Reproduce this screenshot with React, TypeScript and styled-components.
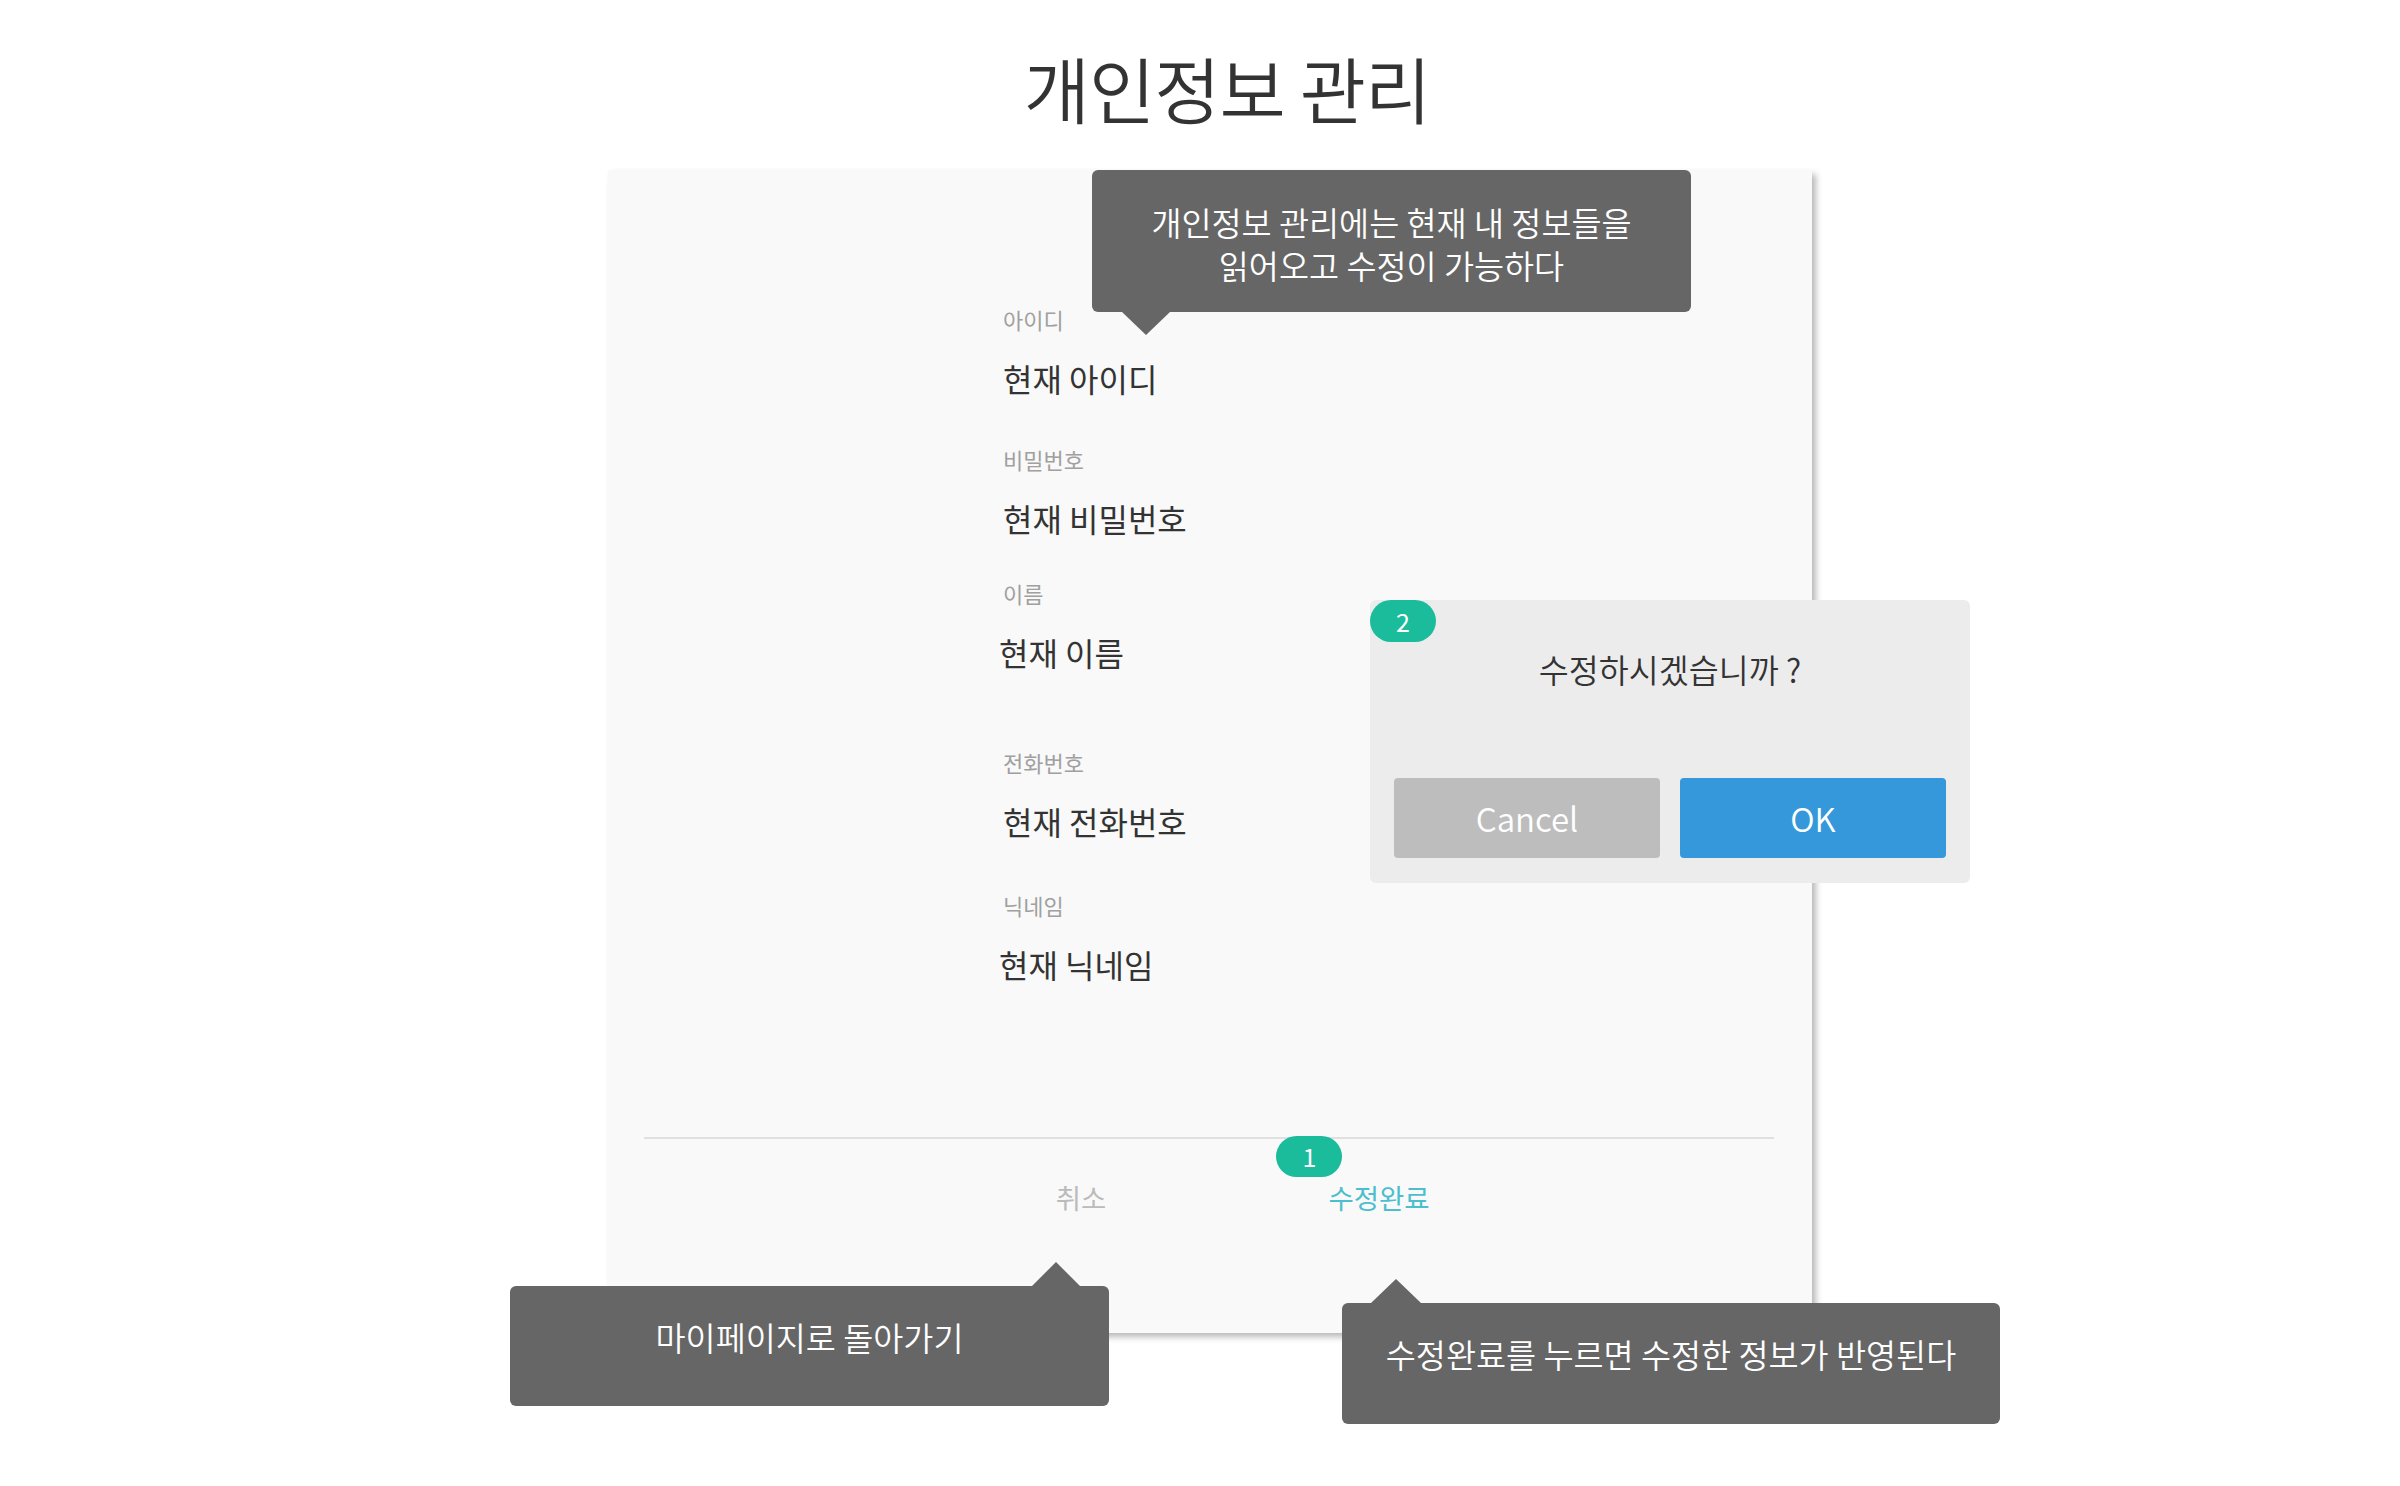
import React from "react";
import styled, { createGlobalStyle } from "styled-components";

const GlobalStyle = createGlobalStyle`
  html, body {
    margin: 0;
    padding: 0;
    background: #ffffff;
  }
  body {
    font-family: "Noto Sans CJK KR", "Noto Sans", sans-serif;
    color: #333333;
  }
  * { box-sizing: border-box; }
`;

const Page = styled.div`
  width: 2400px;
  min-height: 1486px;
  display: flex;
  flex-direction: column;
  align-items: center;
  padding-left: 20px;
`;

const Title = styled.h1`
  margin: 51px 0 0 34px;
  font-size: 72px;
  font-weight: 350;
  line-height: 1;
  color: #333333;
  letter-spacing: -1px;
`;

const Card = styled.section`
  position: relative;
  width: 1204px;
  height: 1163px;
  margin-top: 47px;
  background: #f9f9f9;
  border-radius: 2px;
  box-shadow: 4px 4px 6px rgba(0, 0, 0, 0.28);
  display: flex;
  flex-direction: column;
`;

const Fields = styled.div`
  display: flex;
  flex-direction: column;
  padding: 138px 0 0 395px;
  flex: 1;
`;

const Field = styled.div<{ $top: number }>`
  display: flex;
  flex-direction: column;
  gap: 32px;
  margin-top: ${(p) => p.$top}px;
`;

const Label = styled.span`
  font-size: 22px;
  line-height: 1;
  color: #a0a0a0;
`;

const Value = styled.span<{ $shift?: number }>`
  font-size: 32px;
  line-height: 1;
  color: #333333;
  margin-left: ${(p) => p.$shift ?? 0}px;
`;

const Divider = styled.hr`
  margin: 0 38px 0 36px;
  border: none;
  height: 2px;
  background: #e0e0e0;
`;

const Footer = styled.div`
  display: grid;
  grid-template-columns: 298px 298px;
  justify-content: center;
  padding: 45px 0 0 40px;
  height: 194px;
`;

const FooterButton = styled.button<{ $primary?: boolean }>`
  position: relative;
  justify-self: center;
  align-self: start;
  background: none;
  border: none;
  padding: 0;
  font-family: "Noto Sans CJK KR", "Noto Sans", sans-serif;
  font-size: 27.5px;
  line-height: 1;
  color: ${(p) => (p.$primary ? "#4cbfce" : "#bbbbbb")};
  cursor: pointer;
`;

const StepBadge = styled.span`
  position: absolute;
  display: flex;
  align-items: center;
  justify-content: center;
  width: 66px;
  height: 41px;
  border-radius: 21px;
  background: #1abc9c;
  color: #ffffff;
  font-family: "Noto Sans CJK KR", "Noto Sans", sans-serif;
  font-size: 25px;
  line-height: 1;
`;

const FooterBadge = styled(StepBadge)`
  left: -52px;
  top: -48px;
`;

const DialogBadge = styled(StepBadge)`
  left: 0;
  top: 0;
  height: 42px;
`;

const Tip = styled.div<{ $w: number; $h: number }>`
  position: absolute;
  width: ${(p) => p.$w}px;
  height: ${(p) => p.$h}px;
  background: #666666;
  border-radius: 6px;
  color: #ffffff;
  font-size: 32.7px;
  font-weight: 350;
  line-height: 43px;
  text-align: center;
  display: flex;
  align-items: center;
  justify-content: center;
  z-index: 2;
`;

const TopTip = styled(Tip)`
  left: 484px;
  top: 0;
  padding-top: 4px;
  &::after {
    content: "";
    position: absolute;
    left: 30px;
    bottom: -23px;
    border-left: 24px solid transparent;
    border-right: 24px solid transparent;
    border-top: 23px solid #666666;
  }
`;

const BackTip = styled(Tip)`
  left: -98px;
  top: 1116px;
  padding-bottom: 20px;
  &::after {
    content: "";
    position: absolute;
    left: 522px;
    top: -24px;
    border-left: 24px solid transparent;
    border-right: 24px solid transparent;
    border-bottom: 24px solid #666666;
  }
`;

const DoneTip = styled(Tip)`
  left: 734px;
  top: 1133px;
  padding-bottom: 20px;
  &::after {
    content: "";
    position: absolute;
    left: 29px;
    top: -24px;
    border-left: 25px solid transparent;
    border-right: 25px solid transparent;
    border-bottom: 24px solid #666666;
  }
`;

const Dialog = styled.div`
  position: absolute;
  left: 762px;
  top: 430px;
  width: 600px;
  height: 283px;
  background: #ececec;
  border-radius: 6px;
  display: flex;
  flex-direction: column;
  padding: 0 24px 25px 24px;
  z-index: 2;
`;

const DialogText = styled.p`
  margin: 53px 0 0 0;
  text-align: center;
  font-size: 32.6px;
  font-weight: 350;
  line-height: 1;
  color: #333333;
`;

const DialogActions = styled.div`
  margin-top: auto;
  display: grid;
  grid-template-columns: 1fr 1fr;
  gap: 20px;
`;

const DialogButton = styled.button<{ $variant: "cancel" | "ok" }>`
  height: 80px;
  border: none;
  border-radius: 4px;
  background: ${(p) => (p.$variant === "ok" ? "#3498db" : "#bdbdbd")};
  color: #ffffff;
  font-family: "Noto Sans CJK KR", "Noto Sans", sans-serif;
  font-size: 33px;
  font-weight: 350;
  line-height: 1;
  cursor: pointer;
`;

const fields: { label: string; value: string; top: number; shift?: number }[] = [
  { label: "아이디", value: "현재 아이디", top: 0 },
  { label: "비밀번호", value: "현재 비밀번호", top: 54 },
  { label: "이름", value: "현재 이름", top: 48, shift: -4 },
  { label: "전화번호", value: "현재 전화번호", top: 83 },
  { label: "닉네임", value: "현재 닉네임", top: 57, shift: -4 },
];

export default function App() {
  return (
    <>
      <GlobalStyle />
      <Page>
        <Title>개인정보 관리</Title>
        <Card>
          <Fields>
            {fields.map((f) => (
              <Field key={f.label} $top={f.top}>
                <Label>{f.label}</Label>
                <Value $shift={f.shift}>{f.value}</Value>
              </Field>
            ))}
          </Fields>
          <Divider />
          <Footer>
            <FooterButton>취소</FooterButton>
            <FooterButton $primary>
              <FooterBadge>1</FooterBadge>
              수정완료
            </FooterButton>
          </Footer>

          <TopTip $w={599} $h={142}>
            개인정보 관리에는 현재 내 정보들을
            <br />
            읽어오고 수정이 가능하다
          </TopTip>

          <Dialog>
            <DialogBadge>2</DialogBadge>
            <DialogText>수정하시겠습니까 ?</DialogText>
            <DialogActions>
              <DialogButton $variant="cancel">Cancel</DialogButton>
              <DialogButton $variant="ok">OK</DialogButton>
            </DialogActions>
          </Dialog>

          <BackTip $w={599} $h={120}>마이페이지로 돌아가기</BackTip>
          <DoneTip $w={658} $h={121}>수정완료를 누르면 수정한 정보가 반영된다</DoneTip>
        </Card>
      </Page>
    </>
  );
}
